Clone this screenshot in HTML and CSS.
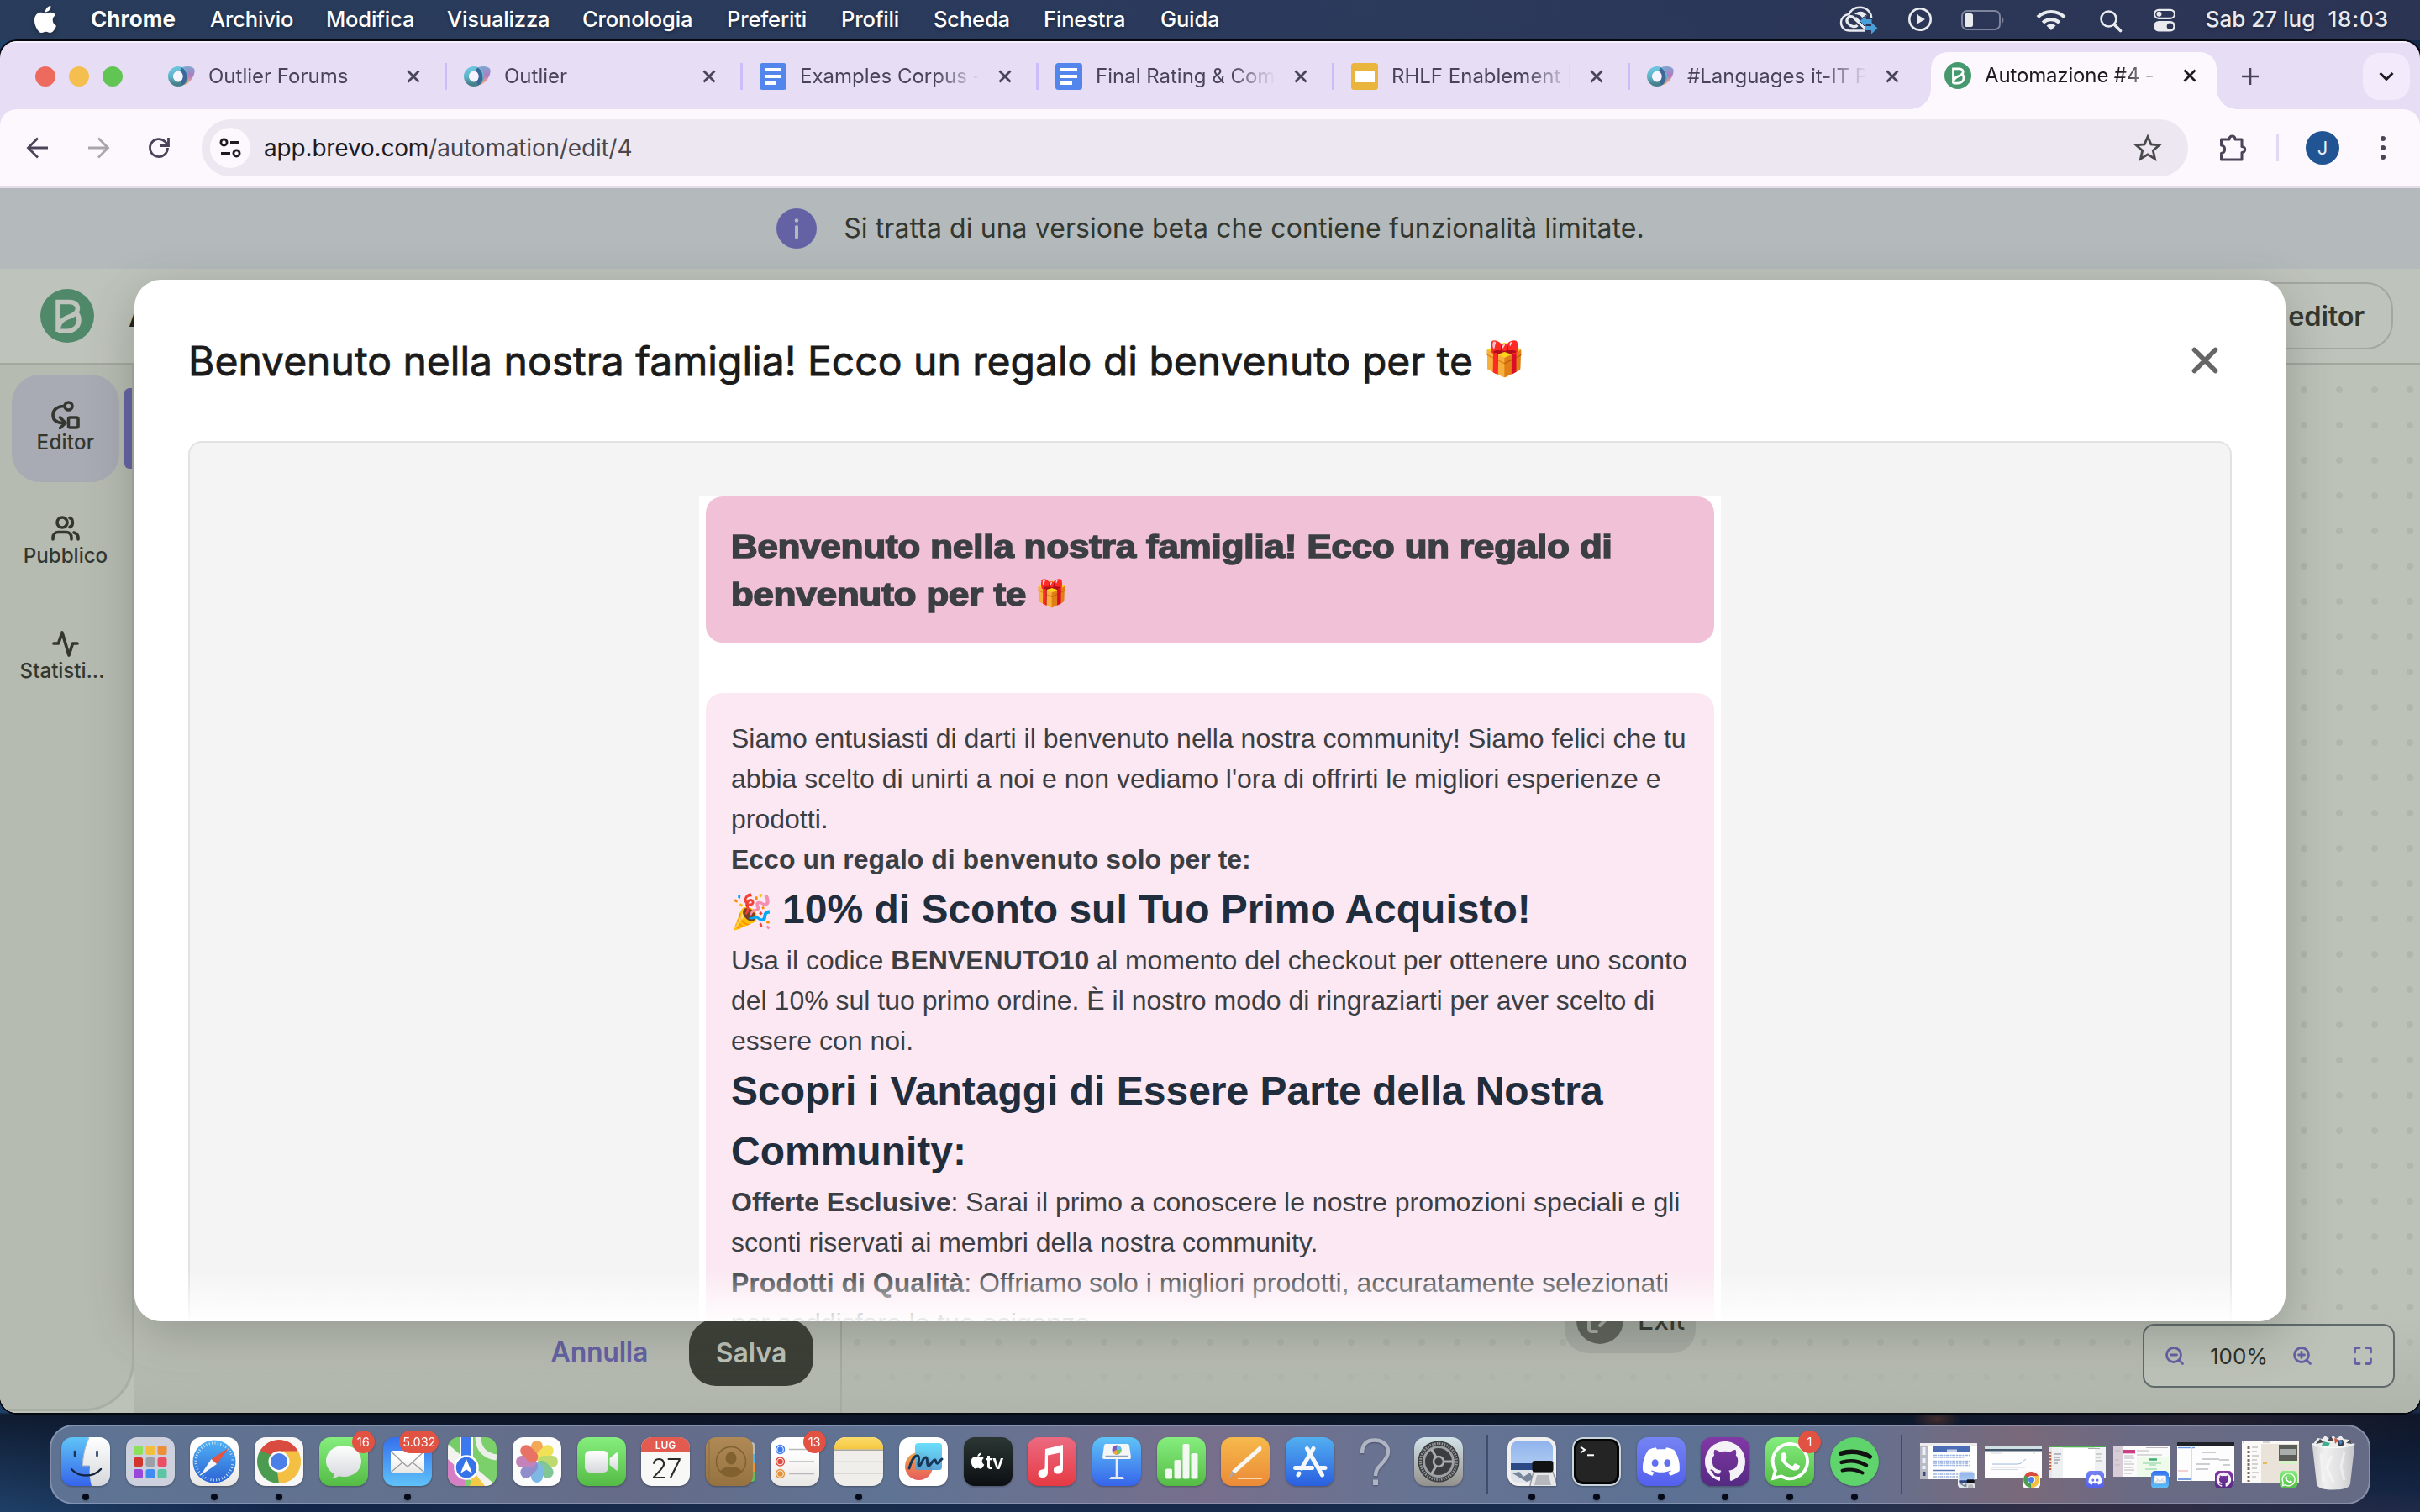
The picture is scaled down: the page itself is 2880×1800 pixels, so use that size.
FILE: index.html
```html
<!DOCTYPE html>
<html lang="it">
<head>
<meta charset="utf-8">
<title>Automazione #4 - Brevo</title>
<link rel="stylesheet" href="styles.css">
</head>
<body>
<svg class="defs" width="0" height="0" aria-hidden="true">
  <defs>
    <linearGradient id="gRing" x1="0" y1="0" x2="0" y2="1"><stop offset="0" stop-color="#6cc4dc"/><stop offset=".55" stop-color="#5fb2c6"/><stop offset="1" stop-color="#46808a"/></linearGradient>
    <linearGradient id="gLobe" x1="0" y1="0" x2="0" y2="1"><stop offset="0" stop-color="#7fa6d2"/><stop offset=".5" stop-color="#b07bc0"/><stop offset="1" stop-color="#f0b98a"/></linearGradient>
    <linearGradient id="gWhite" x1="0" y1="0" x2="0" y2="1"><stop offset="0" stop-color="#ffffff"/><stop offset="1" stop-color="#d6d8dc"/></linearGradient>
    <linearGradient id="gPaper" x1="0" y1="0" x2="0" y2="1"><stop offset=".3" stop-color="#ffffff"/><stop offset="1" stop-color="#e9e7e4"/></linearGradient>
    <linearGradient id="gBlue" x1="0" y1="0" x2="0" y2="1"><stop offset="0" stop-color="#5fc4f7"/><stop offset="1" stop-color="#3664ea"/></linearGradient>
    <linearGradient id="gMail" x1="0" y1="0" x2="0" y2="1"><stop offset="0" stop-color="#3570ee"/><stop offset="1" stop-color="#5fc2f8"/></linearGradient>
    <linearGradient id="gGreen" x1="0" y1="0" x2="0" y2="1"><stop offset="0" stop-color="#86ee7e"/><stop offset="1" stop-color="#54bb45"/></linearGradient>
    <linearGradient id="gCompass" x1="0" y1="0" x2="0" y2="1"><stop offset="0" stop-color="#4fb2f4"/><stop offset="1" stop-color="#2b62d4"/></linearGradient>
    <linearGradient id="gRed" x1="0" y1="0" x2="0" y2="1"><stop offset="0" stop-color="#ec6a80"/><stop offset="1" stop-color="#e63a44"/></linearGradient>
    <linearGradient id="gOrange" x1="0" y1="0" x2="0" y2="1"><stop offset="0" stop-color="#f6b94c"/><stop offset="1" stop-color="#ec8a36"/></linearGradient>
    <linearGradient id="gStore" x1="0" y1="0" x2="0" y2="1"><stop offset="0" stop-color="#52aff0"/><stop offset="1" stop-color="#2a5fe0"/></linearGradient>
    <linearGradient id="gDark" x1="0" y1="0" x2="0" y2="1"><stop offset="0" stop-color="#2b3633"/><stop offset="1" stop-color="#0c0f12"/></linearGradient>
    <linearGradient id="gBrown" x1="0" y1="0" x2="0" y2="1"><stop offset="0" stop-color="#af8a56"/><stop offset="1" stop-color="#95723f"/></linearGradient>
    <linearGradient id="gYellow" x1="0" y1="0" x2="0" y2="1"><stop offset="0" stop-color="#fbdb6b"/><stop offset="1" stop-color="#f5c63f"/></linearGradient>
    <linearGradient id="gSteel" x1="0" y1="0" x2="0" y2="1"><stop offset="0" stop-color="#d3e3ea"/><stop offset="1" stop-color="#93908c"/></linearGradient>
    <linearGradient id="gDiscord" x1="0" y1="0" x2="0" y2="1"><stop offset="0" stop-color="#7584f3"/><stop offset="1" stop-color="#5360ee"/></linearGradient>
    <linearGradient id="gHub" x1="0" y1="0" x2="0" y2="1"><stop offset="0" stop-color="#8338a6"/><stop offset="1" stop-color="#542a82"/></linearGradient>
    <linearGradient id="gSky" x1="0" y1="0" x2="0" y2="1"><stop offset="0" stop-color="#8fb3ec"/><stop offset="1" stop-color="#c3daf5"/></linearGradient>
    <linearGradient id="gPeach" x1="0" y1="0" x2="0" y2="1"><stop offset="0" stop-color="#f3a645"/><stop offset="1" stop-color="#e65b5d"/></linearGradient>
    <linearGradient id="gCyan" x1="0" y1="0" x2="0" y2="1"><stop offset="0" stop-color="#5fdcfb"/><stop offset="1" stop-color="#4f9fd6"/></linearGradient>
    <linearGradient id="gBin" x1="0" y1="0" x2="1" y2="0"><stop offset="0" stop-color="#d2d2d4"/><stop offset=".3" stop-color="#f0f0f1"/><stop offset=".7" stop-color="#dedee0"/><stop offset="1" stop-color="#c4c4c8"/></linearGradient>
    <clipPath id="sq"><rect width="58" height="58" rx="13"/></clipPath>

    <symbol id="apple" viewBox="0 0 24 24"><path d="M12.152 6.896c-.948 0-2.415-1.078-3.96-1.04-2.04.027-3.91 1.183-4.961 3.014-2.117 3.675-.546 9.103 1.519 12.09 1.013 1.454 2.208 3.09 3.792 3.039 1.52-.065 2.09-.987 3.935-.987 1.831 0 2.35.987 3.96.948 1.637-.026 2.676-1.48 3.676-2.948 1.156-1.688 1.636-3.325 1.662-3.415-.039-.013-3.182-1.221-3.22-4.857-.026-3.04 2.48-4.494 2.597-4.559-1.429-2.09-3.623-2.324-4.39-2.376-2-.156-3.675 1.09-4.61 1.09zM15.53 3.83c.843-1.012 1.4-2.427 1.245-3.83-1.207.052-2.662.805-3.532 1.818-.78.896-1.454 2.338-1.273 3.714 1.338.104 2.715-.688 3.559-1.701"/></symbol>
    <symbol id="outlier" viewBox="0 0 32 24"><path d="M14 3C18-1 30-1 31.500 4c1 5-4 15-11 18-4 0-7-8-6-19z" fill="url(#gLobe)"/><path d="M16 2c5 3 7 14 3 20-4 0-7-4-7-10z" fill="#3c6796"/><ellipse cx="12" cy="12" rx="9" ry="9" fill="#fbfbff" stroke="url(#gRing)" stroke-width="6"/><path d="M15 3.600c6 3 6.500 13.400 1 16.600" fill="none" stroke="#3c6796" stroke-width="5"/><ellipse cx="12" cy="12" rx="5.600" ry="6.400" fill="#f6f4ff"/></symbol>
    <symbol id="docs" viewBox="0 0 32 32"><rect width="32" height="32" rx="3.500" fill="#5386ec"/><path d="M6 6h20v4H6zM6 14h20v4H6zM6 22h14v4H6z" fill="#fff"/></symbol>
    <symbol id="slides" viewBox="0 0 32 32"><rect width="32" height="32" rx="3.500" fill="#e9b53c"/><path d="M4 9h24v14H4z" fill="#fff"/></symbol>
    <symbol id="bee" viewBox="0 0 64 64"><g fill="none" stroke="currentColor" stroke-width="5.500"><path d="M21 51V15.500h13.500c8 0 11 5 9.500 10-1.600 5-6.500 6.300-11.500 8.300-7 2.900-11.500 8-11.500 16.200z"/><path d="M21 50.200h10.500c9 0 14.500-6 14.500-13 0-4.500-1.800-7.600-4-9.600"/></g></symbol>
    <symbol id="x" viewBox="0 0 16 16"><path d="M1.500 1.500l13 13M14.500 1.500l-13 13" fill="none" stroke="currentColor" stroke-width="2.800"/></symbol>

    <symbol id="finder" viewBox="0 0 58 58"><g clip-path="url(#sq)"><rect width="58" height="58" fill="url(#gBlue)"/><path d="M33 0C28 10 26 22 25 34h9c-1 8 0 17 2 24h22V0z" fill="url(#gWhite)"/></g><path d="M16 17v5M42.500 17v5" stroke="#1d3557" stroke-width="2.600" stroke-linecap="round"/><path d="M12 38c9 10 26 10 35 0" fill="none" stroke="#14263f" stroke-width="2.400" stroke-linecap="round"/><path d="M33 1C28 10 26 22 25 34h8.500" fill="none" stroke="#9fb3c8" stroke-width="1"/></symbol>
    <symbol id="launch" viewBox="0 0 58 58"><rect width="58" height="58" rx="13" fill="#ccd1dd"/><g><rect x="9" y="10" width="11" height="11" rx="2.500" fill="#8ce05c"/><rect x="23.500" y="10" width="11" height="11" rx="2.500" fill="#f3bd3e"/><rect x="37.500" y="10" width="11" height="11" rx="2.500" fill="#ec8f38"/><rect x="9" y="24" width="11" height="11" rx="2.500" fill="#d0352e"/><rect x="23.500" y="24" width="11" height="11" rx="2.500" fill="#9aa0a6"/><rect x="37.500" y="24" width="11" height="11" rx="2.500" fill="#ea5064"/><rect x="9" y="38" width="11" height="11" rx="2.500" fill="#9a48dc"/><rect x="23.500" y="38" width="11" height="11" rx="2.500" fill="#3f8cf2"/><rect x="37.500" y="38" width="11" height="11" rx="2.500" fill="#5cc5a4"/></g></symbol>
    <symbol id="safari" viewBox="0 0 58 58"><rect width="58" height="58" rx="13" fill="url(#gPaper)"/><circle cx="29" cy="29" r="25.500" fill="url(#gCompass)"/><circle cx="29" cy="29" r="22" fill="none" stroke="#cfe5fb" stroke-width="3" stroke-dasharray="1 2.450"/><path d="M46 13L25.500 26l6.500 6z" fill="#e8533f"/><path d="M12 46l13.500-20 6.500 6z" fill="#f3f5f7"/></symbol>
    <symbol id="chrome" viewBox="0 0 58 58"><rect width="58" height="58" rx="13" fill="#f7f7f7"/><path d="M29 29L6.500 16A26 26 0 0 1 51.500 16z" fill="#d84b3e"/><path d="M29 29L51.500 16A26 26 0 0 1 29 55z" fill="#f4c044"/><path d="M29 29L29 55A26 26 0 0 1 6.500 16z" fill="#4b9b50"/><path d="M29 16h22.500l-11 6z" fill="#d84b3e"/><path d="M40.800 36L29 55l-2-14z" fill="#f4c044"/><path d="M6.500 16L18 36l4-14z" fill="#4b9b50"/><path d="M29 16.500h22.500A26 26 0 0 1 29 55l11.300-19.500z" fill="#f4c044"/><circle cx="29" cy="29" r="12.500" fill="#fff"/><circle cx="29" cy="29" r="10" fill="#4a80e8"/></symbol>
    <symbol id="messages" viewBox="0 0 58 58"><rect width="58" height="58" rx="13" fill="url(#gGreen)"/><path d="M29 10c12 0 21 8 21 18.500S41 47 29 47c-2 0-4-.2-6-.7-2 1.500-5 2.300-7.500 2.400 1.500-1.700 2-3.500 1.800-5.300C11.500 40 8 34.500 8 28.500 8 18 17 10 29 10z" fill="url(#gWhite)"/></symbol>
    <symbol id="mail" viewBox="0 0 58 58"><rect width="58" height="58" rx="13" fill="url(#gMail)"/><rect x="9" y="16" width="40" height="26" rx="3" fill="url(#gPaper)"/><path d="M10 17.500l17 16q2 1.800 4 0l17-16M10 41l13-11M48 41L35 30" fill="none" stroke="#9b9ea3" stroke-width="1.300"/></symbol>
    <symbol id="maps" viewBox="0 0 58 58"><g clip-path="url(#sq)"><rect width="58" height="58" fill="#7bd06c"/><path d="M0 0h14v34H0z" fill="#75cc68"/><path d="M0 16L20 40v18H0z" fill="#d77fc4"/><path d="M0 8l58 50H34L0 26z" fill="#f2f2ee"/><path d="M30 40l14 18H26z" fill="#f3c948"/><path d="M36 0c0 14 8 22 22 24" fill="none" stroke="#eceeea" stroke-width="7"/><path d="M15 0h13v34H15z" fill="#3c79ee"/><path d="M14 0h2v40h-2zM28 0h2v34h-2z" fill="#fff"/></g><circle cx="22" cy="36" r="13.500" fill="#3673ea" stroke="#fff" stroke-width="2.500"/><path d="M22 26l7 17-7-4.500-7 4.500z" fill="#fff"/></symbol>
    <symbol id="photos" viewBox="0 0 58 58"><rect width="58" height="58" rx="13" fill="#fcfcfc"/><g opacity=".85"><rect x="22" y="4" width="14" height="24" rx="7" fill="#f19a38"/><rect x="22" y="4" width="14" height="24" rx="7" fill="#f0dd3c" transform="rotate(45 29 29)"/><rect x="22" y="4" width="14" height="24" rx="7" fill="#b4d455" transform="rotate(90 29 29)"/><rect x="22" y="4" width="14" height="24" rx="7" fill="#6cbd84" transform="rotate(135 29 29)"/><rect x="22" y="4" width="14" height="24" rx="7" fill="#69aee2" transform="rotate(180 29 29)"/><rect x="22" y="4" width="14" height="24" rx="7" fill="#7e7cc4" transform="rotate(225 29 29)"/><rect x="22" y="4" width="14" height="24" rx="7" fill="#b96fb0" transform="rotate(270 29 29)"/><rect x="22" y="4" width="14" height="24" rx="7" fill="#e65a4c" transform="rotate(315 29 29)"/></g></symbol>
    <symbol id="facetime" viewBox="0 0 58 58"><rect width="58" height="58" rx="13" fill="url(#gGreen)"/><rect x="9" y="16" width="28" height="26" rx="6" fill="url(#gWhite)"/><path d="M38.500 25l8-6.500q2-1 2 1v19q0 2-2 1l-8-6.500z" fill="url(#gWhite)"/></symbol>
    <symbol id="calendar" viewBox="0 0 58 58"><rect width="58" height="58" rx="13" fill="#f8f8f7"/><path d="M0 18V13A13 13 0 0 1 13 0h32a13 13 0 0 1 13 13v5z" fill="#e35a50"/><text x="29" y="14" text-anchor="middle" class="cal-month">LUG</text><text x="29" y="48.500" text-anchor="middle" class="cal-day">27</text></symbol>
    <symbol id="contacts" viewBox="0 0 58 58"><path d="M50 6h5q3 0 3 3v11h-8z" fill="#b9bcc0"/><path d="M50 20h8v11h-8z" fill="#57b2ea"/><path d="M50 31h8v10h-8z" fill="#ef9434"/><path d="M50 41h8v9q0 3-3 3h-5z" fill="#62c05a"/><rect width="56" height="58" rx="12" fill="url(#gBrown)"/><path d="M4 4v50" stroke="#8a6a3c" stroke-width="1"/><circle cx="30" cy="29" r="17.500" fill="none" stroke="#80612f" stroke-width="1.500"/><ellipse cx="30" cy="25" rx="6.500" ry="7.500" fill="#80612f"/><path d="M17 41c4-8 22-8 26 0a18 18 0 0 1-26 0z" fill="#80612f"/></symbol>
    <symbol id="reminders" viewBox="0 0 58 58"><rect width="58" height="58" rx="13" fill="url(#gPaper)"/><g fill="none" stroke-width="1.400"><circle cx="11.500" cy="14.500" r="5" stroke="#3b7bee"/><circle cx="11.500" cy="29" r="5" stroke="#dd4b3f"/><circle cx="11.500" cy="43.500" r="5" stroke="#e39238"/></g><circle cx="11.500" cy="14.500" r="3.200" fill="#3b7bee"/><circle cx="11.500" cy="29" r="3.200" fill="#dd4b3f"/><circle cx="11.500" cy="43.500" r="3.200" fill="#e39238"/><path d="M22 14.500h30M22 29h30M22 43.500h30" stroke="#b9b9bb" stroke-width="1.300"/></symbol>
    <symbol id="notes" viewBox="0 0 58 58"><rect width="58" height="58" rx="13" fill="#efeeeb"/><path d="M0 14.500V13A13 13 0 0 1 13 0h32a13 13 0 0 1 13 13v1.500z" fill="url(#gYellow)"/><path d="M0 15.200h58" stroke="#a9a69c" stroke-width="1.600"/><path d="M1 17.500h56" stroke="#8c8c8c" stroke-width="1" stroke-dasharray="1 1.200"/><path d="M0 29h58M0 43.500h58" stroke="#d9d8d5" stroke-width="1.200"/></symbol>
    <symbol id="freeform" viewBox="0 0 58 58"><rect width="58" height="58" rx="13" fill="#fff"/><circle cx="23.500" cy="34.500" r="16.500" fill="url(#gPeach)"/><rect x="19" y="7" width="32" height="32" rx="3.500" fill="url(#gCyan)" opacity=".93"/><path d="M12 37c2-7 6-16 10-15 4 1-1 12 2 12s4-11 8-10c3 1 0 9 3 10 3 0 5-8 8-7 1 1 1 5 3 4s3-4 5-5" fill="none" stroke="#16365a" stroke-width="3" stroke-linecap="round"/></symbol>
    <symbol id="tv" viewBox="0 0 58 58"><rect width="58" height="58" rx="13" fill="url(#gDark)"/><use href="#apple" x="7" y="17.500" width="19" height="21" fill="#fff"/><text x="26" y="38" class="tv-label">tv</text></symbol>
    <symbol id="music" viewBox="0 0 58 58"><rect width="58" height="58" rx="13" fill="url(#gRed)"/><path d="M21 14l21-5v28.500c0 4-3 6-6 6-3.500 0-5-2-5-4.300 0-3.700 3-5 6-5.400 1-.2 1.500-.8 1.500-2V18.500L24 21.500V42c0 4-3 6-6 6-3.500 0-5.500-2-5.500-4.500 0-3.300 2.500-4.800 6-5.300 1.300-.2 2-.8 2-2.200z" fill="#fff"/></symbol>
    <symbol id="keynote" viewBox="0 0 58 58"><rect width="58" height="58" rx="13" fill="url(#gBlue)"/><path d="M16 8h26q1.500 0 2 2l2 14q0 2-2 2H14q-2 0-2-2l2-14q.5-2 2-2z" fill="#f4f6f8"/><path d="M15.500 22.500h27" stroke="#8aa3b8" stroke-width="1.500"/><circle cx="29" cy="15" r="5.500" fill="#7a5cc0"/><path d="M29 15V9.500a5.500 5.500 0 0 1 5.500 5.500z" fill="#57c0e8"/><path d="M29 15h5.500a5.500 5.500 0 0 1-5.500 5.500z" fill="#7ac954"/><path d="M29 15v5.500a5.500 5.500 0 0 1-5-3z" fill="#f2a63c"/><rect x="27.700" y="26" width="2.600" height="22" fill="#e6edf4"/><path d="M22 47h14l2 3H20z" fill="#dfe7f0"/></symbol>
    <symbol id="numbers" viewBox="0 0 58 58"><rect width="58" height="58" rx="13" fill="url(#gGreen)"/><g fill="#f4f8f2"><rect x="10" y="37.500" width="8" height="12" rx="1.800"/><rect x="20.500" y="27" width="8" height="22.500" rx="1.800"/><rect x="30.500" y="8" width="8" height="41.500" rx="1.800"/><rect x="40.500" y="19" width="8" height="30.500" rx="1.800"/></g></symbol>
    <symbol id="pages" viewBox="0 0 58 58"><rect width="58" height="58" rx="13" fill="url(#gOrange)"/><path d="M46 10.500q3.500.5 2 5L17 43l-7 6 3-9z" fill="#f7f6f3"/><path d="M10 49l3-9 4 3.500z" fill="#4d4a46" opacity=".45"/><path d="M20 49h29" stroke="#fbe0bd" stroke-width="1.800"/></symbol>
    <symbol id="store" viewBox="0 0 58 58"><rect width="58" height="58" rx="13" fill="url(#gStore)"/><g stroke="#f4f8fd" stroke-width="5" stroke-linecap="round"><path d="M33 13.500L19 37M16 43l-1 2M25.500 13.500L43.500 45M11.500 36.500h20M41 36.500h6"/></g></symbol>
    <symbol id="help" viewBox="0 0 58 58"><path d="M14 19C14 8 20 3.500 29 3.500S45 9 45 17c0 6-3 10-8 15-5 5-7 8-7 14" fill="none" stroke="#aeb4c2" stroke-width="4.500"/><rect x="27" y="50.500" width="6" height="6.500" fill="#aeb4c2"/></symbol>
    <symbol id="settings" viewBox="0 0 58 58"><rect width="58" height="58" rx="13" fill="url(#gSteel)"/><circle cx="29" cy="29" r="24.500" fill="#3c3d3f"/><circle cx="29" cy="29" r="21.500" fill="none" stroke="#8f9496" stroke-width="3" stroke-dasharray="1.600 1.300"/><circle cx="29" cy="29" r="17.500" fill="none" stroke="#9ba0a2" stroke-width="3"/><circle cx="29" cy="29" r="6" fill="none" stroke="#a9adaf" stroke-width="2.500"/><path d="M35 29h11M26 23.800L20.500 14M26 34.200L20.500 44" stroke="#a9adaf" stroke-width="3"/></symbol>
    <symbol id="preview" viewBox="0 0 58 58"><rect width="58" height="58" rx="13" fill="#f1f0ee"/><rect x="4" y="4" width="50" height="50" rx="9" fill="url(#gSky)"/><path d="M4 31h50v8H4z" fill="#2c4b86"/><path d="M4 39h50v6q0 9-9 9H13q-9 0-9-9z" fill="#dfe4ea"/><path d="M6 43l8-2 5 6 8-5 4 8-8 3z" fill="#77859a"/><path d="M31 41l-4 16q0 4 4 4h24q4 0 4-4l-5-16z" fill="#e6e8ea" stroke="#8d8f92" stroke-width="1.200"/><path d="M35 45l-3 12h20l-3-12z" fill="#b5b9be"/><rect x="29.500" y="28" width="25" height="13.500" rx="3" fill="#111214"/></symbol>
    <symbol id="terminal" viewBox="0 0 58 58"><rect width="58" height="58" rx="13" fill="#c9d6dd"/><rect x="2" y="2" width="54" height="54" rx="11" fill="#050505"/><rect x="5" y="5" width="48" height="48" rx="8" fill="#242424"/><path d="M10 11.500l5 3.500-5 3.500" fill="none" stroke="#fff" stroke-width="2"/><path d="M18 21.300h8" stroke="#fff" stroke-width="2"/></symbol>
    <symbol id="discord" viewBox="0 0 58 58"><rect width="58" height="58" rx="13" fill="url(#gDiscord)"/><path transform="translate(7 7) scale(1.830)" fill="#fff" d="M20.317 4.370a19.791 19.791 0 00-4.885-1.515.074.074 0 00-.079.037c-.211.375-.445.865-.608 1.250-1.845-.276-3.680-.276-5.487 0-.164-.393-.406-.874-.618-1.250a.077.077 0 00-.079-.037 19.736 19.736 0 00-4.885 1.515.070.070 0 00-.032.028C.533 9.046-.319 13.580.099 18.058a.082.082 0 00.031.056c2.053 1.508 4.041 2.423 5.993 3.029a.078.078 0 00.084-.028c.462-.630.873-1.295 1.226-1.994a.076.076 0 00-.042-.106c-.653-.248-1.274-.550-1.872-.892a.077.077 0 01-.008-.128c.126-.094.252-.192.372-.291a.074.074 0 01.078-.011c3.928 1.793 8.180 1.793 12.061 0a.074.074 0 01.079.010c.120.099.246.198.373.292a.077.077 0 01-.007.128 12.299 12.299 0 01-1.873.891.077.077 0 00-.041.107c.360.698.772 1.363 1.225 1.993a.076.076 0 00.084.029c1.961-.607 3.950-1.522 6.002-3.029a.077.077 0 00.031-.055c.500-5.177-.838-9.674-3.549-13.660a.061.061 0 00-.031-.029zM8.020 15.331c-1.183 0-2.157-1.086-2.157-2.419 0-1.333.956-2.419 2.157-2.419 1.211 0 2.176 1.095 2.157 2.419 0 1.333-.956 2.419-2.157 2.419zm7.975 0c-1.183 0-2.157-1.086-2.157-2.419 0-1.333.955-2.419 2.157-2.419 1.211 0 2.176 1.095 2.157 2.419 0 1.333-.946 2.419-2.157 2.419z"/></symbol>
    <symbol id="github" viewBox="0 0 58 58"><rect width="58" height="58" rx="13" fill="url(#gHub)"/><path transform="translate(5 4.500) scale(2)" fill="#f4f1f7" d="M12 .297c-6.630 0-12 5.373-12 12 0 5.303 3.438 9.800 8.205 11.385.6.113.82-.258.82-.577 0-.285-.01-1.040-.015-2.040-3.338.724-4.042-1.610-4.042-1.610C4.422 18.070 3.633 17.700 3.633 17.700c-1.087-.744.084-.729.084-.729 1.205.084 1.838 1.236 1.838 1.236 1.070 1.835 2.809 1.305 3.495.998.108-.776.417-1.305.76-1.605-2.665-.3-5.466-1.332-5.466-5.930 0-1.310.465-2.380 1.235-3.220-.135-.303-.54-1.523.105-3.176 0 0 1.005-.322 3.300 1.230.96-.267 1.980-.399 3-.405 1.020.006 2.040.138 3 .405 2.280-1.552 3.285-1.230 3.285-1.230.645 1.653.24 2.873.12 3.176.765.84 1.230 1.910 1.230 3.220 0 4.610-2.805 5.625-5.475 5.920.42.36.81 1.096.81 2.220 0 1.606-.015 2.896-.015 3.286 0 .315.21.69.825.57C20.565 22.092 24 17.592 24 12.297c0-6.627-5.373-12-12-12"/></symbol>
    <symbol id="whatsapp" viewBox="0 0 58 58"><rect width="58" height="58" rx="13" fill="url(#gGreen)"/><path transform="translate(6.500 6) scale(1.900)" fill="#fff" d="M17.472 14.382c-.297-.149-1.758-.867-2.030-.967-.273-.099-.471-.148-.67.15-.197.297-.767.966-.94 1.164-.173.199-.347.223-.644.075-.297-.15-1.255-.463-2.390-1.475-.883-.788-1.480-1.761-1.653-2.059-.173-.297-.018-.458.13-.606.134-.133.298-.347.446-.52.149-.174.198-.298.298-.497.099-.198.05-.371-.025-.52-.075-.149-.669-1.612-.916-2.207-.242-.579-.487-.5-.669-.51-.173-.008-.371-.01-.57-.01-.198 0-.52.074-.792.372-.272.297-1.040 1.016-1.040 2.479 0 1.462 1.065 2.875 1.213 3.074.149.198 2.096 3.200 5.077 4.487.709.306 1.262.489 1.694.625.712.227 1.360.195 1.871.118.571-.085 1.758-.719 2.006-1.413.248-.694.248-1.289.173-1.413-.074-.124-.272-.198-.57-.347m-5.421 7.403h-.004a9.870 9.870 0 01-5.031-1.378l-.361-.214-3.741.982.998-3.648-.235-.374a9.860 9.860 0 01-1.510-5.260c.001-5.450 4.436-9.884 9.888-9.884 2.640 0 5.122 1.030 6.988 2.898a9.825 9.825 0 012.893 6.994c-.003 5.450-4.437 9.884-9.885 9.884m8.413-18.297A11.815 11.815 0 0012.050 0C5.495 0 .16 5.335.157 11.892c0 2.096.547 4.142 1.588 5.945L.057 24l6.305-1.654a11.882 11.882 0 005.683 1.448h.005c6.554 0 11.890-5.335 11.893-11.893a11.821 11.821 0 00-3.480-8.413z"/></symbol>
    <symbol id="spotify" viewBox="-1 -1 60 60"><circle cx="29" cy="29" r="30" fill="#5fd36c"/><g fill="none" stroke="#111" stroke-linecap="round"><path d="M12 19c12-3.500 25-2.500 36 4" stroke-width="5.500"/><path d="M13 30c10-3 21-1.800 30.500 3.500" stroke-width="4.600"/><path d="M14 40c9-2.200 17-1.300 25 3" stroke-width="4"/></g></symbol>
  </defs>
</svg>

<div class="desktop">
  <header class="menubar">
    <svg class="menubar-apple" viewBox="0 0 24 24"><use href="#apple" width="24" height="24"/></svg>
    <nav class="menus">
      <b>Chrome</b><span>Archivio</span><span>Modifica</span><span>Visualizza</span><span>Cronologia</span><span>Preferiti</span><span>Profili</span><span>Scheda</span><span>Finestra</span><span>Guida</span>
    </nav>
    <div class="status">
      <svg class="st-cloud" width="46" height="34" viewBox="0 0 46 34"><g fill="none" stroke="#e8eaee" stroke-width="2.400"><path d="M31 29.500H12.500C5.500 29.500 2 25 2 19.800 2 14.500 6 10.500 11.500 10 14 4.500 19 1.800 24.500 1.800c7.500 0 13 5 13.800 12.500"/><path d="M31 27L16.500 13.500c-5-3.500-10 3-6 7.500s9 4.500 11 2" stroke-width="3.200"/><path d="M19 14l9 9" stroke-width="3"/></g><path d="M18 10c5-5 12-4 15 1.500l-6 2.500c-2-3-5-4-9-4z" fill="#e8eaee"/><path d="M24 18l8-7v4.500h7v6h-7V26z" fill="#4a9fd9" stroke="#2c3454" stroke-width="1"/><path d="M45.500 26.500l-7.500-7V24h-7v5h7v4.500z" fill="#4a9fd9"/></svg>
      <svg class="st-play" width="30" height="30" viewBox="0 0 30 30"><circle cx="15" cy="15" r="12.700" fill="none" stroke="#e8eaee" stroke-width="2.600"/><path d="M11 9l10 6-10 6z" fill="#e8eaee"/></svg>
      <svg class="st-batt" width="52" height="26" viewBox="0 0 52 26"><rect x="1" y="2" width="45" height="22" rx="6" fill="none" stroke="#7c839a" stroke-width="2"/><rect x="4" y="5" width="10" height="16" rx="2.500" fill="#e8eaee"/><path d="M48.500 9c2.500 1.500 2.500 6.500 0 8z" fill="#7c839a"/></svg>
      <svg class="st-wifi" width="36" height="26" viewBox="0 0 36 26"><g fill="none" stroke="#e8eaee" stroke-width="4.200"><path d="M2 9.500c9-8.700 23-8.700 32 0"/><path d="M8.200 16c5.500-5.300 14-5.300 19.600 0"/></g><path d="M18 25l-5.500-5.500c3-2.800 8-2.800 11 0z" fill="#e8eaee"/></svg>
      <svg class="st-find" width="28" height="28" viewBox="0 0 28 28"><circle cx="11.500" cy="11.500" r="9" fill="none" stroke="#e8eaee" stroke-width="2.600"/><path d="M18 18l7.500 7.500" stroke="#e8eaee" stroke-width="3.600" stroke-linecap="round"/></svg>
      <svg class="st-cc" width="28" height="28" viewBox="0 0 28 28"><rect x="2" y="1.800" width="24" height="10" rx="5" fill="none" stroke="#e8eaee" stroke-width="2.200"/><circle cx="7.500" cy="6.800" r="3" fill="#e8eaee"/><rect x="1" y="15" width="26" height="12.500" rx="6" fill="#e8eaee"/><circle cx="20.500" cy="21.200" r="3.800" fill="#2c3454"/></svg>
      <span class="date">Sab 27 lug</span><span class="time">18:03</span>
    </div>
  </header>

  <main class="window">
    <div class="tabstrip">
      <div class="lights"><i class="red"></i><i class="yellow"></i><i class="green"></i></div>
      <div class="tab"><svg class="fav wide"><use href="#outlier"/></svg><span>Outlier Forums</span><svg class="close"><use href="#x"/></svg></div>
      <div class="tab"><svg class="fav wide"><use href="#outlier"/></svg><span>Outlier</span><svg class="close"><use href="#x"/></svg></div>
      <div class="tab"><svg class="fav"><use href="#docs"/></svg><span>Examples Corpus -</span><svg class="close"><use href="#x"/></svg></div>
      <div class="tab"><svg class="fav"><use href="#docs"/></svg><span>Final Rating &amp; Com</span><svg class="close"><use href="#x"/></svg></div>
      <div class="tab"><svg class="fav"><use href="#slides"/></svg><span>RHLF Enablement |</span><svg class="close"><use href="#x"/></svg></div>
      <div class="tab last"><svg class="fav wide"><use href="#outlier"/></svg><span>#Languages it-IT P</span><svg class="close"><use href="#x"/></svg></div>
      <div class="tab active"><svg class="fav brevo" viewBox="0 0 64 64"><circle cx="32" cy="32" r="32" fill="#46996f"/><use href="#bee" width="64" height="64"/></svg><span>Automazione #4 -</span><svg class="close"><use href="#x"/></svg></div>
      <svg class="newtab" width="20" height="20" viewBox="0 0 20 20"><path d="M10 0v20M0 10h20" stroke="#4a4458" stroke-width="2.600"/></svg>
      <div class="tabmenu"><svg width="18" height="12" viewBox="0 0 18 12"><path d="M1.500 2l7.500 7.500L16.500 2" fill="none" stroke="#1d1b20" stroke-width="3"/></svg></div>
    </div>

    <div class="toolbar">
      <svg class="nav-ico" width="28" height="28" viewBox="0 0 28 28"><path d="M26 14H3M14 2.500L2.500 14 14 25.500" fill="none" stroke="#4a4458" stroke-width="2.800"/></svg>
      <svg class="nav-ico" width="28" height="28" viewBox="0 0 28 28"><path d="M2 14h23M14 2.500L25.500 14 14 25.500" fill="none" stroke="#a9a5ad" stroke-width="2.800"/></svg>
      <svg class="nav-ico" width="28" height="28" viewBox="0 0 28 28"><path d="M24.500 14A10.500 10.500 0 1 1 21.500 6.700L24.500 9.500" fill="none" stroke="#4a4458" stroke-width="2.800"/><path d="M25.500 2v9.500H16" fill="none" stroke="#4a4458" stroke-width="2.800"/></svg>
      <div class="omnibox">
        <div class="site"><svg width="26" height="24" viewBox="0 0 26 24"><g fill="none" stroke="#1d1b20" stroke-width="2.800"><circle cx="5.500" cy="5.500" r="3.600"/><path d="M13 5.500h11M2 18.500h11"/><circle cx="20.500" cy="18.500" r="3.600"/></g></svg></div>
        <span class="url">app.brevo.com<i>/automation/edit/4</i></span>
        <svg width="34" height="34" viewBox="0 0 34 34"><path d="M17 3.800l3.900 9.100 9.800.9-7.400 6.500 2.200 9.700L17 24.900 8.500 30l2.200-9.700-7.400-6.500 9.800-.9z" fill="none" stroke="#4a4a4d" stroke-width="2.800"/></svg>
      </div>
      <svg class="puzzle" width="36" height="36" viewBox="0 0 36 36"><path d="M4.500 8H14c0-5.500 7-5.500 7 0h8v8.500c5 0 5 7 0 7V32H4.500v-7.500c5.500-1 5.500-8.500 0-9.500z" fill="none" stroke="#4a4458" stroke-width="3" stroke-linejoin="round"/></svg>
      <i class="bar"></i>
      <div class="avatar">J</div>
      <svg class="kebab" width="8" height="30" viewBox="0 0 8 30"><g fill="#4a4458"><circle cx="4" cy="4" r="3"/><circle cx="4" cy="15" r="3"/><circle cx="4" cy="26" r="3"/></g></svg>
    </div>

    <section class="page">
      <div class="banner">
        <svg width="48" height="48" viewBox="0 0 48 48"><circle cx="24" cy="24" r="24" fill="#6461a4"/><circle cx="24" cy="14.500" r="2.300" fill="#b4babb"/><path d="M24 22v12.500" stroke="#b4babb" stroke-width="4" stroke-linecap="round"/></svg>
        <p>Si tratta di una versione beta che contiene funzionalità limitate.</p>
      </div>
      <div class="apphead">
        <svg class="logo" width="64" height="64" viewBox="0 0 64 64"><circle cx="32" cy="32" r="32" fill="#50896a"/><use href="#bee" width="64" height="64"/></svg>
        <h1>A</h1>
        <button class="oldeditor">editor</button>
      </div>
      <div class="work">
        <aside class="side">
          <a class="item on"><svg width="34" height="34" viewBox="0 0 34 34"><g fill="none" stroke="#33372f" stroke-width="3.600" stroke-linejoin="round" stroke-linecap="round"><circle cx="20.500" cy="6.500" r="4.500"/><path d="M15.500 6.500C7 6.500 2 11 2 17s4 9 11 9.500"/><path d="M10.500 20l6.500 6.500-6.500 6"/><rect x="20.500" y="20" width="11.500" height="12" rx="2"/></g></svg>Editor</a>
          <a class="item"><svg width="34" height="34" viewBox="0 0 34 34"><g fill="none" stroke="#33372f" stroke-width="3.600" stroke-linecap="round"><circle cx="13" cy="10" r="6"/><path d="M2 30v-2c0-4 3-6.500 6.500-6.500h9c4 0 6.500 2.500 6.500 6.500v2M22 4.500c4.500 1.500 4.500 9.500 0 11M27 22c3.500 1 5 3.500 5 6.500V30"/></g></svg>Pubblico</a>
          <a class="item"><svg width="34" height="34" viewBox="0 0 34 34"><path d="M3 17h5.500L13 4l8 27 4.500-14H31" fill="none" stroke="#33372f" stroke-width="3.700" stroke-linejoin="round" stroke-linecap="round"/></svg>Statisti...</a>
        </aside>
        <div class="panel">
          <span class="cancel">Annulla</span>
          <button class="save">Salva</button>
        </div>
        <div class="canvas">
          <div class="node"><svg width="56" height="56" viewBox="0 0 56 56"><circle cx="28" cy="28" r="28" fill="#5e625b"/><path d="M15 20v17q0 4 4 4h5M28 34l14-14" fill="none" stroke="#a9aea7" stroke-width="4" stroke-linecap="round"/></svg>Exit</div>
          <div class="zoom">
            <svg width="24" height="24" viewBox="0 0 24 24"><g fill="none" stroke="#6461a4" stroke-width="2.800" stroke-linecap="round"><circle cx="11" cy="11" r="8.500"/><path d="M17.500 17.500L21.500 21.500M7.500 11h7"/></g></svg>
            <span>100%</span>
            <svg width="24" height="24" viewBox="0 0 24 24"><g fill="none" stroke="#6461a4" stroke-width="2.800" stroke-linecap="round"><circle cx="11" cy="11" r="8.500"/><path d="M17.500 17.500L21.500 21.500M7.500 11h7M11 7.500v7"/></g></svg>
            <svg class="expand" width="24" height="24" viewBox="0 0 24 24"><path d="M2.500 8V4.500q0-2 2-2H8M16 2.500h3.500q2 0 2 2V8M21.500 16v3.500q0 2-2 2H16M8 21.500H4.500q-2 0-2-2V16" fill="none" stroke="#6461a4" stroke-width="2.800" stroke-linecap="round"/></svg>
          </div>
        </div>
      </div>

      <div class="modal" role="dialog">
        <div class="modal-head">
          <h2>Benvenuto nella nostra famiglia! Ecco un regalo di benvenuto per te</h2><span class="gift">🎁</span>
          <svg width="34" height="34" viewBox="0 0 34 34"><path d="M4.500 4.500l25 25M29.500 4.500l-25 25" stroke="#666" stroke-width="5.600" stroke-linecap="round"/></svg>
        </div>
        <div class="preview">
          <article class="mail">
            <h3>
              <div><b>Benvenuto nella nostra famiglia! Ecco un regalo di</b></div>
              <div><b>benvenuto per te</b><span>🎁</span></div>
            </h3>
            <div class="mail-body">
              <p>Siamo entusiasti di darti il benvenuto nella nostra community! Siamo felici che tu abbia scelto di unirti a noi e non vediamo l'ora di offrirti le migliori esperienze e prodotti.</p>
              <p><b>Ecco un regalo di benvenuto solo per te:</b></p>
              <h4><span>🎉</span>10% di Sconto sul Tuo Primo Acquisto!</h4>
              <p>Usa il codice <b>BENVENUTO10</b> al momento del checkout per ottenere uno sconto del 10% sul tuo primo ordine. È il nostro modo di ringraziarti per aver scelto di essere con noi.</p>
              <h4>Scopri i Vantaggi di Essere Parte della Nostra Community:</h4>
              <p><b>Offerte Esclusive</b>: Sarai il primo a conoscere le nostre promozioni speciali e gli sconti riservati ai membri della nostra community.</p>
              <p><b>Prodotti di Qualità</b>: Offriamo solo i migliori prodotti, accuratamente selezionati per soddisfare le tue esigenze.</p>
            </div>
          </article>
        </div>
      </div>
    </section>
  </main>

  <footer class="dock">
    <div class="app run"><svg><use href="#finder"/></svg></div>
    <div class="app"><svg><use href="#launch"/></svg></div>
    <div class="app run"><svg><use href="#safari"/></svg></div>
    <div class="app run"><svg><use href="#chrome"/></svg></div>
    <div class="app"><svg><use href="#messages"/></svg><em>16</em></div>
    <div class="app run"><svg><use href="#mail"/></svg><em>5.032</em></div>
    <div class="app"><svg><use href="#maps"/></svg></div>
    <div class="app"><svg><use href="#photos"/></svg></div>
    <div class="app"><svg><use href="#facetime"/></svg></div>
    <div class="app"><svg><use href="#calendar"/></svg></div>
    <div class="app"><svg><use href="#contacts"/></svg></div>
    <div class="app"><svg><use href="#reminders"/></svg><em>13</em></div>
    <div class="app run"><svg><use href="#notes"/></svg></div>
    <div class="app"><svg><use href="#freeform"/></svg></div>
    <div class="app"><svg><use href="#tv"/></svg></div>
    <div class="app"><svg><use href="#music"/></svg></div>
    <div class="app"><svg><use href="#keynote"/></svg></div>
    <div class="app"><svg><use href="#numbers"/></svg></div>
    <div class="app"><svg><use href="#pages"/></svg></div>
    <div class="app"><svg><use href="#store"/></svg></div>
    <div class="app"><svg><use href="#help"/></svg></div>
    <div class="app"><svg><use href="#settings"/></svg></div>
    <i class="sep"></i>
    <div class="app run"><svg><use href="#preview"/></svg></div>
    <div class="app run"><svg><use href="#terminal"/></svg></div>
    <div class="app run"><svg><use href="#discord"/></svg></div>
    <div class="app run"><svg><use href="#github"/></svg></div>
    <div class="app run"><svg><use href="#whatsapp"/></svg><em>1</em></div>
    <div class="app run"><svg><use href="#spotify"/></svg></div>
    <i class="sep second"></i>
    <div class="min">
      <svg width="68" height="58" viewBox="0 0 68 58"><rect y="7" width="68" height="43" fill="#fff"/><rect y="7" width="9" height="43" fill="#b9bbc4"/><rect y="7" width="68" height="3" fill="#ececee"/><path d="M2.500 12h4v9h-4zM2.500 25h4v6h-4zM2.500 34h4v4h-4z" fill="#eef"/><path d="M3 41h3.500v5H3z" fill="#3c4a78"/><rect x="16" y="10" width="44" height="8" fill="#4a6cb4"/><rect x="32" y="14.500" width="12" height="3" fill="#c5cfe4"/><path d="M16 21.500h44M16 24h38M16 28.500h44M16 31h42M16 33.500h44M16 44h44M16 47h44" stroke="#9db4e0" stroke-width="1.400" stroke-dasharray="4 .8 2 .6"/><path d="M16 39.500h26" stroke="#5c7cbf" stroke-width="1.500"/></svg>
      <svg class="mini"><use href="#preview"/></svg></div>
    <div class="min">
      <svg width="68" height="58" viewBox="0 0 68 58"><rect y="10" width="68" height="38" fill="#fdfdfd"/><rect y="10" width="68" height="4" fill="#cfe0e2"/><rect y="14" width="68" height="2.500" fill="#44566a"/><path d="M8 19h12M57 19h3M8 36h40M8 38.500h32" stroke="#d5d8de" stroke-width="1"/><path d="M9 32h30l3-.5 7-5.500" fill="none" stroke="#9fb6dc" stroke-width="1"/></svg>
      <svg class="mini"><use href="#chrome"/></svg></div>
    <div class="min">
      <svg width="68" height="58" viewBox="0 0 68 58"><rect y="10" width="68" height="38" fill="#fff"/><rect y="10" width="68" height="2.300" fill="#4cae50"/><rect y="12" width="4" height="36" fill="#e3e5e8"/><rect x="4" y="12" width="13" height="36" fill="#eef0f2"/><path d="M2 17v22" stroke="#c2603c" stroke-width="2.500" stroke-dasharray="2.500 1.500"/><path d="M6 20h9M6 24h7M6 27h8M6 31h5" stroke="#7c8087" stroke-width="1"/><rect x="55" y="12" width="13" height="36" fill="#f0f1f3"/><path d="M57 20h7M57 24h5M57 28h7M47 13.500h14" stroke="#aaa" stroke-width="1"/></svg>
      <svg class="mini"><use href="#discord"/></svg></div>
    <div class="min">
      <svg width="68" height="58" viewBox="0 0 68 58"><rect y="11" width="68" height="36" fill="#fbfbfb"/><rect y="11" width="11.500" height="36" fill="#d8ccd6"/><rect x="12" y="15" width="14" height="4.300" fill="#cb3f85"/><path d="M13 22h10M13 25h12M13 29h9M13 32h12M13 36h10M13 39h12M13 43h9M2 16h6M2 27h5M2 33h6M39 12.500h26M28 16h14M28 21h30" stroke="#bdb7bf" stroke-width="1"/><rect x="28" y="24" width="38" height="23" fill="#eefbea"/><path d="M42 26.500h10" stroke="#3fae74" stroke-width="2.500"/><path d="M35 31h22M43 33h8M38 38h14" stroke="#82cf9c" stroke-width="1"/></svg>
      <svg class="mini"><use href="#mail"/></svg></div>
    <div class="min">
      <svg width="68" height="58" viewBox="0 0 68 58"><rect y="6" width="68" height="46" fill="#fdfdfd"/><rect y="6" width="68" height="5" fill="#1f2328"/><path d="M1 12.500h20" stroke="#6a9be0" stroke-width="1.400"/><path d="M17.500 12v40" stroke="#ddd" stroke-width="1"/><path d="M30 18h16M30 26h20M50 27h12M23 32h16M55 33h8M23 38h14" stroke="#9a9da3" stroke-width="1.200"/><path d="M1 40h12" stroke="#e5a9a9" stroke-width="1"/><rect x="1" y="48.500" width="15" height="2.500" fill="#7ba0df"/></svg>
      <svg class="mini"><use href="#github"/></svg></div>
    <div class="min">
      <svg width="68" height="58" viewBox="0 0 68 58"><rect y="4" width="68" height="50" fill="#fbfaf9"/><rect x="23" y="8" width="45" height="46" fill="#e9e3da"/><rect x="44" y="9" width="22" height="19" fill="#5b5d59"/><rect x="45" y="14" width="20" height="7" fill="#a9adab"/><rect x="45" y="28" width="21" height="4" fill="#d9f3c8"/><path d="M8 11v42" stroke="#7b6b62" stroke-width="3" stroke-dasharray="3 2"/><path d="M12 12h7M12 17h6M12 22h8M12 27h6M12 32h7M12 37h6M12 42h8M12 47h5M25 6h8" stroke="#aaa" stroke-width="1"/><path d="M1.500 6h1.500" stroke="#e2594e" stroke-width="1.500"/><path d="M25 31h5" stroke="#e4b23c" stroke-width="1.600"/></svg>
      <svg class="mini"><use href="#whatsapp"/></svg></div>
    <svg class="trash" width="54" height="68" viewBox="0 0 54 68"><path d="M3 13l5-7 6 1 3-4 5 4 5-4 3 4 6-4 3 4 6 1 5 5-4 5H7z" fill="#eceded"/><path d="M6 13l5-6 5 4zM20 9l4-5 4 6zM42 12l5-4 2 5z" fill="#4a4a50"/><path d="M15 10l8 2-3 5-7-2z" fill="#3fae8f"/><path d="M28 6l5 2-4 5z" fill="#d9553c"/><path d="M31 9l7-1 2 6-6 3z" fill="#3b3f46"/><path d="M33 8l5 3-3 3z" fill="#4a7fd0"/><path d="M1.500 12c14 6 37 6 51 0l-5.500 48c-.5 5-6 7.500-20 7.500S7.500 65 7 60z" fill="url(#gBin)"/><path d="M2 13c14 6 36 6 50 0" fill="none" stroke="#fff" stroke-width="1.600" opacity=".8"/><path d="M12 24l3 34M25 27l-6 14 8 18M40 22l-4 18 4 16" fill="none" stroke="#fff" stroke-width="3" opacity=".45"/></svg>
  </footer>
</div>
</body>
</html>
```
FILE: styles.css
```css
* { box-sizing: border-box; }
body { margin: 0; font-family: Inter, "Liberation Sans", sans-serif; }
p, h1, h2, h3, h4 { margin: 0; }
i { font-style: normal; }
button { font-family: inherit; background: none; border: 0; padding: 0; }
svg { display: block; flex: none; }
.defs { position: absolute; }

.desktop {
  width: 2880px; height: 1800px; overflow: hidden;
  display: flex; flex-direction: column;
  background:
    radial-gradient(ellipse 30px 14px at 2305px 1689px, rgba(130, 70, 45, .45), transparent),
    radial-gradient(ellipse 300px 50px at 2620px 1690px, rgba(55, 40, 55, .5), transparent),
    radial-gradient(ellipse 500px 30px at 2500px 1796px, rgba(70, 45, 60, .6), transparent),
    linear-gradient(180deg, transparent 1681px, rgba(8, 12, 24, .7) 1684px, transparent 1800px),
    linear-gradient(90deg, #1f4068 0, #13264a 12%, #1a2c4c 30%, #172a4c 50%, #1b3354 75%, #16294a 100%);
}

/* menu bar */
.menubar {
  height: 48px; flex: none; display: flex; align-items: center; padding-left: 37px; padding-right: 37px;
  background: linear-gradient(90deg, #293c5b, #2b3a5c 50%, #2c3454);
  color: #fff; font-size: 25.500px; font-weight: 500; letter-spacing: -.15px;
}
.menubar-apple { width: 34px; height: 32px; margin-top: -3px; fill: #fff; filter: drop-shadow(0 2px 3px rgba(0, 0, 0, .3)); }
.menus {
  margin-left: 37px; margin-top: -3px; display: grid; white-space: nowrap;
  grid-template-columns: 142px 138px 144px 161px 172px 136px 110px 131px 139px auto;
  text-shadow: 0 2px 4px rgba(0, 0, 0, .35);
}
.menus b { font-weight: 700; font-size: 26px; letter-spacing: .1px; }
.status { margin-left: auto; display: flex; align-items: center; color: #e8eaee; text-shadow: 0 2px 4px rgba(0, 0, 0, .35); }
.st-play { margin-left: 35px; margin-top: -2px; }
.st-batt { margin-left: 34px; }
.st-wifi { margin-left: 37px; margin-top: -1px; }
.st-find { margin-left: 39px; margin-top: 1px; }
.st-cc { margin-left: 36px; margin-top: -1px; }
.date { margin-left: 35px; margin-top: -3px; font-size: 26px; letter-spacing: 0; }
.time { margin-left: 15px; margin-top: -3px; font-size: 26px; letter-spacing: .9px; }

/* browser window */
.window {
  height: 1633px; flex: none; display: flex; flex-direction: column; overflow: hidden;
  border-radius: 20px; background: #e7def5;
  box-shadow: 0 0 0 2px #06080f;
  margin-top: 1px;
}
.tabstrip { height: 81px; flex: none; display: flex; align-items: center; border-top: 2px solid #f6f1fc; }
.lights { width: 178px; padding-left: 42px; display: flex; gap: 16px; flex: none; }
.lights i { width: 24px; height: 24px; border-radius: 50%; }
.red { background: #ec6a5e; }
.yellow { background: #f4bf4f; }
.green { background: #61c554; }
.tab {
  width: 354px; height: 32px; flex: none; display: flex; align-items: center; padding-left: 22px;
  border-right: 3px solid #cdbcf9; color: #4a4458; font-size: 24px; margin-right: -2px;
}
.tab.last { border-color: transparent; }
.fav { width: 32px; height: 32px; }
.fav.wide { height: 24px; }
.tab span {
  width: 212px; margin-left: 16px; overflow: hidden; white-space: nowrap; line-height: 32px;
  -webkit-mask-image: linear-gradient(90deg, #000 76%, transparent 101%); mask-image: linear-gradient(90deg, #000 76%, transparent 101%);
}
.close { width: 16px; height: 16px; margin-left: 24px; }
.tab.active {
  position: relative; width: 340px; height: 68px; align-self: flex-end; margin: 0 0 0 8px; padding-left: 16px; padding-bottom: 12px;
  border: 0; border-radius: 20px 20px 0 0; background: #fdf8fe; color: #1d1b20;
}
.tab.active span { letter-spacing: -.15px; }
.tab.active::before, .tab.active::after { content: ""; position: absolute; bottom: 0; width: 24px; height: 24px; }
.tab.active::before { left: -24px; background: radial-gradient(circle at 0 0, transparent 23.500px, #fdf8fe 24px); }
.tab.active::after { right: -24px; background: radial-gradient(circle at 24px 0, transparent 23.500px, #fdf8fe 24px); }
.brevo { color: #fff; }
.newtab { margin-left: 30px; }
.tabmenu { margin-left: auto; margin-right: 12px; width: 56px; height: 56px; border-radius: 20px; background: #f3ebfc; display: flex; align-items: center; justify-content: center; }

.toolbar {
  height: 94px; flex: none; display: flex; align-items: center; padding-left: 31px;
  background: #fdf8fe; border-radius: 20px 20px 0 0; border-bottom: 2px solid #e5deea;
}
.nav-ico { margin-right: 44px; }
.nav-ico:nth-child(3) { margin-right: 37px; }
.omnibox { width: 2364px; height: 68px; border-radius: 34px; background: #ece7f1; display: flex; align-items: center; padding: 0 31px 0 10px; }
.site { width: 48px; height: 48px; border-radius: 50%; background: #fdf8fe; display: flex; align-items: center; justify-content: center; }
.url { flex: 1; margin-left: 16px; font-size: 28px; letter-spacing: -.17px; color: #1d1b20; }
.url i { color: #4a474e; }
.puzzle { margin-left: 35px; }
.bar { width: 3px; height: 32px; background: #e1d7f7; margin-left: 34px; }
.avatar { width: 40px; height: 40px; border-radius: 50%; margin-left: 32px; background: #205493; color: #e9f0fa; font: 400 22px/40px Inter, sans-serif; text-align: center; }
.kebab { margin-left: 48px; }

/* app page under the dialog */
.page { position: relative; flex: 1; display: flex; flex-direction: column; background: #bdc2b9; color: #33372f; }
.banner { height: 96px; flex: none; display: flex; align-items: center; justify-content: center; gap: 32px; background: #b4babb; font-size: 32px; letter-spacing: .08px; padding-left: 1px; }
.banner p { margin-top: -1px; }
.apphead { height: 114px; flex: none; display: flex; align-items: center; padding: 0 32px 0 48px; border-bottom: 2px solid #a2a7a0; background: #bec3bb; }
.logo { color: #bec3bb; }
.apphead h1 { margin-left: 41px; font-size: 36px; font-weight: 700; line-height: 48px; color: #1c1f19; }
.oldeditor {
  margin-left: auto; width: 300px; height: 80px; border: 2px solid #a2a7a0; border-radius: 32px;
  text-align: right; padding-right: 32px; font-size: 32.500px; font-weight: 600; letter-spacing: -.2px; color: #33372f;
}
.work { flex: 1; display: flex; }
.side { width: 160px; display: flex; flex-direction: column; padding: 12px 0 0 14px; gap: 8px; background: #b6bbb2; border-right: 3px solid #a9aea5; border-bottom: 3px solid #a9aea5; border-radius: 0 0 60px 0; margin-bottom: 2px; }
.item { position: relative; width: 128px; height: 128px; border-radius: 34px; display: flex; flex-direction: column; align-items: center; padding: 31px 0 0 0; font-size: 24.200px; line-height: 32px; font-weight: 500; white-space: nowrap; letter-spacing: -.05px; }
.item.on { background: #a8abb4; letter-spacing: .2px; }
.item.on::after { content: ""; position: absolute; left: 134px; top: 16px; width: 9px; height: 96px; border-radius: 6px 0 0 6px; background: #6461a4; }
.item:nth-child(2) { padding-top: 30px; }
.item:nth-child(3) { padding-top: 31px; padding-right: 8px; }
.item:nth-child(3) svg { margin-left: 8px; }
.panel { width: 842px; display: flex; align-items: flex-end; justify-content: flex-end; gap: 49px; padding: 0 32px 32px 0; border-right: 2px solid #a6aba3; background: linear-gradient(180deg, #bdc2b9 1130px, #b0b5ac 1248px); font-size: 32px; font-weight: 600; letter-spacing: -.25px; }
.cancel { color: #6461a4; line-height: 80px; }
.save { width: 148px; height: 80px; border-radius: 32px; background: #3b3e36; color: #bec3bb; font-size: 32px; font-weight: 600; }
.canvas {
  flex: 1; display: flex; justify-content: space-between; align-items: flex-end; padding: 0 30px 30px 860px;
  background:
    radial-gradient(circle at 21px 21px, #b0b5ad 3.500px, transparent 4.500px) -3px 9px / 42px 42px,
    linear-gradient(180deg, #bdc2b9 1130px, #b0b5ac 1248px);
}
.node { width: 156px; height: 79px; margin-bottom: 41px; border-radius: 28px; background: #a9aea6; display: flex; align-items: center; padding-left: 14px; gap: 17px; font-size: 32px; font-weight: 500; }
.zoom { width: 300px; height: 76px; border: 2px solid #5f6a6b; border-radius: 14px; background: #bdc2b9; display: flex; align-items: center; padding-left: 24px; font-size: 26px; color: #2a2e28; }
.zoom span { margin: 0 29px 0 30px; }
.expand { margin-left: 48px; }

/* dialog */
.modal {
  position: absolute; left: 160px; top: 109px; width: 2560px; height: 1240px; overflow: hidden;
  border-radius: 32px; background: #fff; display: flex; flex-direction: column; padding: 0 64px;
  box-shadow: 0 16px 56px rgba(60, 66, 56, .3);
}
.modal::after { content: ""; position: absolute; left: 0; right: 0; bottom: 0; height: 62px; background: linear-gradient(180deg, rgba(255, 255, 255, 0), rgba(255, 255, 255, .92)); }
.modal-head { height: 192px; flex: none; display: flex; align-items: center; }
.modal-head h2 { font-size: 48px; font-weight: 400; letter-spacing: .01px; color: #1b1b1b; white-space: nowrap; -webkit-text-stroke: .8px #1b1b1b; }
.gift { font-size: 40px; margin-left: 12px; margin-top: -4px; line-height: 48px; }
.modal-head svg { margin-left: auto; margin-right: 15px; }
.preview { height: 1200px; border: 2px solid #e2e2e2; border-radius: 16px; background: #f4f4f4; padding-top: 64px; flex: none; }
.mail { width: 1216px; height: 1200px; margin: 0 auto; padding: 0 8px; background: #fff; font-family: "Liberation Sans", Arial, sans-serif; color: #3b3f44; display: flex; flex-direction: column; gap: 60px; }
.mail h3 { height: 174px; padding: 32px 0 0 30px; border-radius: 20px; background: #f1c1d8; font-size: 38px; line-height: 57px; white-space: nowrap; }
.mail h3 div { display: flex; height: 57px; }
.mail h3 b { transform: scaleX(1.147); transform-origin: left; -webkit-text-stroke: 1.700px #3b3f44; }
.mail h3 span { font-size: 31px; margin-left: 56px; margin-top: -2px; }
.mail-body { padding: 30px 30px 0; border-radius: 20px 20px 0 0; background: #fbe8f2; flex: 1; }
.mail p { font-size: 32px; line-height: 48px; }
.mail h4 { font-size: 48px; line-height: 72px; color: #1f2d3d; }
.mail h4 span { display: inline-block; width: 61px; font-size: 40px; line-height: 40px; white-space: nowrap; }

/* dock */
.dock {
  position: relative; height: 95px; flex: none; margin: 14px 59px 0; display: flex; align-items: flex-start; padding: 13px 0 0 12px;
  border: 2px solid rgba(190, 200, 225, .38); border-radius: 28px;
  background: linear-gradient(90deg, #5e7394, #62728f 14%, #656b88 25%, #5f7394 36%, #776f8c 50%, #687392 58%, #5c7194 70%, #65708f 78%, #79697a 85%, #6a6a84 90%, #656b85 100%);
}
.app { position: relative; width: 58px; height: 58px; margin-right: 18.700px; flex: none; filter: drop-shadow(0 1px 1px rgba(0, 0, 0, .3)); }
.app svg { width: 58px; height: 58px; }
.app.run::after { content: ""; position: absolute; left: 25px; top: 67px; width: 8px; height: 8px; border-radius: 50%; background: #060a18; }
.app em { position: absolute; top: -8px; right: -8px; min-width: 27px; height: 27px; padding: 0 4px; border-radius: 14px; background: #e25243; color: #fff; font: 400 14.500px/27px Inter, sans-serif; text-align: center; }
.sep { width: 2px; height: 70px; margin: -3px 23px 0 9px; background: #3e4d6e; flex: none; }
.sep.second { margin: -3px 21px 0 8px; }
.min { position: relative; width: 68px; height: 58px; margin-right: 8.500px; flex: none; }
.mini { position: absolute; left: 45px; top: 40px; width: 21px; height: 21px; }
.trash { margin: -5px 0 0 6px; }
.cal-month { font: 600 12px Inter, sans-serif; fill: #fff; }
.cal-day { font: 300 33px Inter, sans-serif; fill: #2a2a2a; letter-spacing: -1.500px; }
.tv-label { font: 600 23px Inter, sans-serif; fill: #fff; letter-spacing: -.5px; }
```
